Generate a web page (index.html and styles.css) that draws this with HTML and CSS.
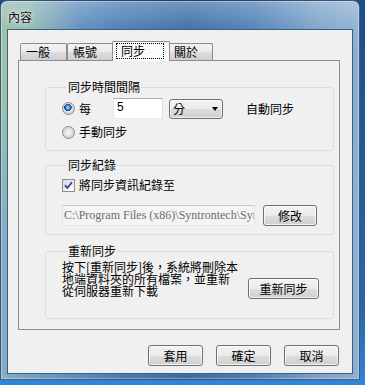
FILE: index.html
```html
<!DOCTYPE html>
<html lang="zh-Hant">
<head>
<meta charset="utf-8">
<title>內容</title>
<link rel="stylesheet" href="styles.css">
</head>
<body>
<div class="window">
  <div class="titlebar"><span class="title">內容</span></div>
  <div class="client">
    <div class="tabcontrol">
      <div class="tabstrip">
        <div class="tab">一般</div>
        <div class="tab">帳號</div>
        <div class="tab selected"><span class="focus">同步</span></div>
        <div class="tab last">關於</div>
      </div>
      <div class="panel">
        <fieldset class="group g1">
          <legend>同步時間間隔</legend>
          <div class="row r1">
            <span class="radio checked"></span>
            <span class="lbl">每</span>
            <span class="textbox num">5</span>
            <span class="combo">分<span class="arrow"></span></span>
            <span class="auto">自動同步</span>
          </div>
          <div class="row r2">
            <span class="radio"></span>
            <span class="lbl">手動同步</span>
          </div>
        </fieldset>
        <fieldset class="group g2">
          <legend>同步紀錄</legend>
          <div class="row r3">
            <span class="check"><svg width="11" height="11" viewBox="0 0 11 11"><path d="M2 5.2 L4.3 8 L9 2.2" fill="none" stroke="#3d4f8a" stroke-width="1.9" stroke-linejoin="round"/></svg></span>
            <span class="lbl">將同步資訊紀錄至</span>
          </div>
          <div class="row r4">
            <span class="textbox path">C:\Program Files (x86)\Syntrontech\Syn</span>
            <span class="btn edit">修改</span>
          </div>
        </fieldset>
        <fieldset class="group g3">
          <legend>重新同步</legend>
          <div class="row r5">
            <p class="desc">按下[重新同步]後，系統將刪除本<br>地端資料夾的所有檔案，並重新<br>從伺服器重新下載</p>
            <span class="btn resync">重新同步</span>
          </div>
        </fieldset>
      </div>
    </div>
    <div class="buttons">
      <span class="btn dlg">套用</span>
      <span class="btn dlg">確定</span>
      <span class="btn dlg">取消</span>
    </div>
  </div>
</div>
</body>
</html>
```
FILE: styles.css
```css
html, body {
  margin: 0;
  padding: 0;
}
body {
  width: 365px;
  height: 385px;
  overflow: hidden;
  background: linear-gradient(180deg, #1d4d8a 0%, #2a64a8 80%, #2f86d8 100%);
  font-family: "Noto Sans CJK TC", "Noto Sans CJK SC", sans-serif;
  font-size: 12px;
  color: #000;
}
.window {
  width: 360px;
  height: 380px;
  box-sizing: border-box;
  border: 1px solid rgba(20, 40, 70, 0.65);
  border-radius: 7px 7px 0 0;
  padding: 0 6px 5px 6px;
  display: flex;
  flex-direction: column;
  background:
    linear-gradient(180deg, rgba(255,255,255,0.28) 0px, rgba(255,255,255,0.05) 28px, rgba(255,255,255,0) 60px),
    radial-gradient(ellipse 70px 170px at 10px 70px, rgba(160,200,160,0.95), rgba(160,200,160,0) 100%),
    linear-gradient(90deg, #86aec8 0%, #6d9ac4 12%, #4b7db5 32%, #3b6ca6 52%, #4d7eb5 70%, #7ba2c9 88%, #8db0d2 100%);
  box-shadow: inset 0 0 0 1px rgba(255,255,255,0.35);
}
.titlebar {
  height: 28px;
  flex: none;
  display: flex;
  align-items: flex-start;
}
.title {
  margin: 9px 0 0 1px;
  line-height: 14px;
  font-size: 12px;
  color: #111;
  text-shadow: 0 0 6px rgba(255,255,255,0.9), 0 0 3px rgba(255,255,255,0.8);
}
.client {
  flex: none;
  width: 346px;
  height: 345px;
  box-sizing: border-box;
  border: 1px solid #3e5f80;
  background: #f0f0f0;
  display: flex;
  flex-direction: column;
}
.tabcontrol {
  margin: 11px 0 0 10px;
  width: 322px;
}
.tabstrip {
  height: 19px;
  display: flex;
  align-items: flex-end;
  padding-left: 2px;
}
.tab {
  height: 17px;
  box-sizing: border-box;
  border: 1px solid #898c95;
  border-bottom: none;
  border-radius: 2px 2px 0 0;
  padding: 0 16px 0 5px;
  line-height: 15px;
  background: linear-gradient(180deg, #f2f2f2 0%, #ebebeb 50%, #dddddd 51%, #cfcfcf 100%);
  white-space: nowrap;
}
.tab.last {
  padding-right: 14px;
}
.tab.selected {
  position: relative;
  z-index: 1;
  height: 20px;
  margin: 0 -2px -1px -2px;
  padding: 0 5px 0 3px;
  background: #fbfbfb;
  line-height: 15px;
}
.focus {
  display: inline-block;
  border: 1px dotted #000;
  padding: 0 18px 0 4px;
  line-height: 14px;
  margin-top: 1px;
}
.panel {
  height: 270px;
  box-sizing: border-box;
  border: 1px solid #898c95;
  background: #f0f0f0;
  display: flex;
  flex-direction: column;
  align-items: flex-start;
}
.group {
  margin: 0 0 0 26px;
  width: 289px;
  box-sizing: border-box;
  border: 1px solid #d5dfe5;
  border-radius: 3px;
  padding: 0 0 0 16px;
  min-width: 0;
}
.group legend {
  padding: 0 1px;
  margin-left: 5px;
  line-height: 14px;
}
.g1 { margin-top: 19px; height: 71px; padding-top: 4px; }
.g2 { margin-top: 7px; height: 77px; padding-top: 5px; }
.g3 { margin-top: 9px; height: 75px; padding-top: 3px; }
.row {
  display: flex;
  align-items: center;
}
.r1 { height: 21px; }
.r2 { height: 16px; margin-top: 5px; }
.r3 { height: 16px; }
.r4 { height: 21px; margin-top: 12px; }
.r5 { align-items: flex-start; }
.lbl {
  margin-left: 4px;
  line-height: 14px;
}
.radio {
  width: 13px;
  height: 13px;
  box-sizing: border-box;
  border-radius: 50%;
  border: 1px solid #8d8d8d;
  background: radial-gradient(circle at 50% 50%, #f8f8f8 0px, #e6e6e6 3px, #d2d2d2 5px, #eeeeee 6px);
  flex: none;
}
.radio.checked {
  background:
    radial-gradient(circle at 45% 40%, #bfe6fb 0px, #5aa6dc 1.5px, #1d5fa3 3px, #163f77 3.6px, rgba(0,0,0,0) 3.8px),
    radial-gradient(circle at 50% 50%, #f8f8f8 0px, #e6e6e6 3px, #d2d2d2 5px, #eeeeee 6px);
}
.check {
  width: 13px;
  height: 13px;
  box-sizing: border-box;
  border: 1px solid #8d8d8d;
  background: linear-gradient(135deg, #d8d8d8 0%, #f6f6f6 70%, #ffffff 100%);
  display: flex;
  align-items: center;
  justify-content: center;
  flex: none;
}
.check svg { display: block; }
.textbox {
  box-sizing: border-box;
  border: 1px solid;
  border-color: #abadb3 #dbdfe6 #e3e9ef #e2e3ea;
  background: #fff;
  white-space: nowrap;
  overflow: hidden;
}
.num {
  margin-left: 22px;
  width: 50px;
  height: 21px;
  padding: 1px 0 0 3px;
  font-family: "Liberation Sans", sans-serif;
  line-height: 14px;
}
.combo {
  margin-left: 6px;
  width: 54px;
  height: 20px;
  box-sizing: border-box;
  border: 1px solid #707070;
  border-radius: 3px;
  background: linear-gradient(180deg, #f2f2f2 0%, #ebebeb 50%, #dddddd 51%, #cfcfcf 100%);
  box-shadow: inset 0 0 0 1px rgba(255,255,255,0.7);
  padding-left: 3px;
  line-height: 18px;
  display: flex;
  align-items: center;
  justify-content: space-between;
}
.arrow {
  width: 0;
  height: 0;
  border-top: 4px solid #000;
  border-left: 3.5px solid transparent;
  border-right: 3.5px solid transparent;
  margin-right: 4px;
  margin-top: 1px;
}
.auto {
  margin-left: 23px;
  line-height: 14px;
}
.path {
  width: 193px;
  height: 21px;
  border-color: #c9cacc #e1e3e6 #e6e9ec #e3e4e8;
  background: #f4f4f4;
  color: #6d6d6d;
  font-family: "Liberation Serif", serif;
  font-size: 12px;
  line-height: 19px;
  padding-left: 1px;
}
.btn {
  box-sizing: border-box;
  border: 1px solid #707070;
  border-radius: 3px;
  background: linear-gradient(180deg, #f2f2f2 0%, #ebebeb 50%, #dddddd 51%, #cfcfcf 100%);
  box-shadow: inset 0 0 0 1px rgba(255,255,255,0.75);
  display: flex;
  align-items: center;
  justify-content: center;
  line-height: 14px;
  flex: none;
}
.edit {
  margin-left: 8px;
  width: 54px;
  height: 21px;
}
.desc {
  margin: 0;
  width: 180px;
  line-height: 12px;
  white-space: nowrap;
}
.resync {
  margin: 17px 0 0 6px;
  width: 71px;
  height: 21px;
}
.buttons {
  margin-top: 15px;
  padding-right: 13px;
  display: flex;
  justify-content: flex-end;
  gap: 13px;
}
.dlg {
  width: 55px;
  height: 21px;
}
```
